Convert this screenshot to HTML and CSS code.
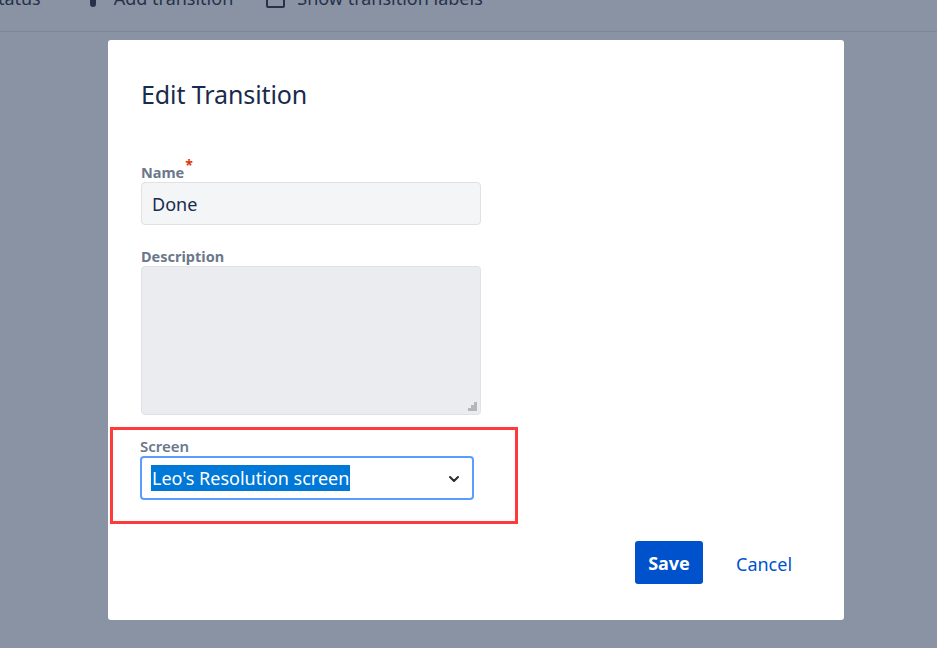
FILE: index.html
```html
<!DOCTYPE html>
<html>
<head>
<meta charset="utf-8">
<link rel="stylesheet" href="styles.css">
</head>
<body>
<div class="page">
  <div class="toolbar">
    <div class="tool-items">
      <span class="tool">Status</span>
      <span class="tool add"><span class="dot"></span>Add transition</span>
      <span class="tool show"><span class="check"></span>Show transition labels</span>
    </div>
  </div>
  <div class="modal">
    <h1 class="title">Edit Transition</h1>
    <div class="field name-field">
      <label class="label">Name<span class="req">*</span></label>
      <div class="input">Done</div>
    </div>
    <div class="field desc-field">
      <label class="label">Description</label>
      <div class="textarea">
        <svg class="grip" width="9" height="9" viewBox="0 0 9 9"><g fill="#b3b6bd"><rect x="6" y="0" width="3" height="3"/><rect x="3" y="3" width="3" height="3"/><rect x="6" y="3" width="3" height="3"/><rect x="0" y="6" width="3" height="3"/><rect x="3" y="6" width="3" height="3"/><rect x="6" y="6" width="3" height="3"/></g></svg>
      </div>
    </div>
    <div class="highlight">
      <label class="label">Screen</label>
      <div class="select">
        <span class="sel-text">Leo's Resolution screen</span>
        <svg class="chev" width="12" height="8" viewBox="0 0 12 8"><path d="M2 2 L6 6 L10 2" fill="none" stroke="#2b2b2b" stroke-width="2" stroke-linecap="round" stroke-linejoin="round"/></svg>
      </div>
    </div>
    <div class="actions">
      <button class="btn-save">Save</button>
      <button class="btn-cancel">Cancel</button>
    </div>
  </div>
</div>
</body>
</html>
```

FILE: styles.css
```css
* { box-sizing: border-box; }
html, body { margin: 0; padding: 0; }
body {
  background: #8993a4;
  font-family: "Noto Sans", "Open Sans", sans-serif;
  width: 937px;
  height: 648px;
  overflow: hidden;
}
.page { width: 937px; height: 648px; }
.toolbar {
  height: 32px;
  border-bottom: 1px solid #7d8698;
  overflow: hidden;
}
.tool-items {
  display: flex;
  align-items: center;
  margin-top: -13px;
  height: 22px;
  color: #27324a;
  font-size: 18px;
}
.tool { display: flex; align-items: center; white-space: nowrap; }
.tool:first-child { margin-left: -12px; }
.add { margin-left: 49px; }
.dot {
  width: 6px; height: 14px; background: #27324a; border-radius: 3px;
  margin-right: 18px; margin-top: 4px;
}
.show { margin-left: 33px; }
.check {
  width: 19px; height: 19px; border: 2px solid #27324a; border-radius: 2px;
  margin-right: 12px;
}
.modal {
  margin: 8px 0 0 108px;
  width: 736px;
  height: 580px;
  background: #fff;
  border-radius: 3px;
  padding: 0 0 0 33px;
  display: flex;
  flex-direction: column;
}
.title {
  margin: 0;
  padding-top: 37px;
  font-weight: 400;
  font-size: 25px;
  line-height: 34px;
  color: #172b4d;
  letter-spacing: -0.1px;
}
.field { display: flex; flex-direction: column; width: 340px; }
.name-field { margin-top: 51px; }
.desc-field { margin-top: 21px; }
.label {
  font-size: 14.5px;
  font-weight: 700;
  color: #6b778c;
  line-height: 20px;
  height: 20px;
  position: relative;
}
.req { color: #de350b; font-size: 14px; position: relative; top: -8px; margin-left: 1px; }
.input {
  height: 43px;
  background: #f4f5f7;
  border: 1px solid #dfe1e6;
  border-radius: 4px;
  padding: 0 10px;
  display: flex;
  align-items: center;
  font-size: 18px;
  color: #172b4d;
}
.textarea {
  height: 149px;
  background: #ebecf0;
  border: 1px solid #dfe1e6;
  border-radius: 4px;
  position: relative;
}
.grip { position: absolute; right: 3px; bottom: 3px; }
.highlight {
  margin: 12px 0 0 -31px;
  width: 408px;
  height: 97px;
  border: 3px solid #ff3a3a;
  padding: 6px 0 0 27px;
  display: flex;
  flex-direction: column;
}
.highlight .label { font-weight: 600; color: #6b778c; font-size: 15px; }
.select {
  width: 334px;
  height: 44px;
  border: 2px solid #5b9dff;
  border-radius: 4px;
  display: flex;
  align-items: center;
  justify-content: space-between;
  padding: 0 12px 0 9px;
}
.sel-text {
  background: #0078d7;
  color: #fff;
  font-size: 18px;
  line-height: 26px;
  padding: 0 1px;
}
.chev { margin-top: 1px; }
.actions {
  display: flex;
  align-items: center;
  margin-top: 17px;
  padding-left: 494px;
}
.btn-save {
  width: 68px;
  height: 43px;
  background: #0052cc;
  color: #fff;
  font-family: inherit;
  font-weight: 700;
  font-size: 18px;
  border: none;
  border-radius: 3px;
  padding: 0;
}
.btn-cancel {
  margin-left: 23px;
  background: none;
  border: none;
  color: #0052cc;
  font-family: inherit;
  font-size: 18px;
  padding: 0 10px;
  margin-top: 2px;
}
```
